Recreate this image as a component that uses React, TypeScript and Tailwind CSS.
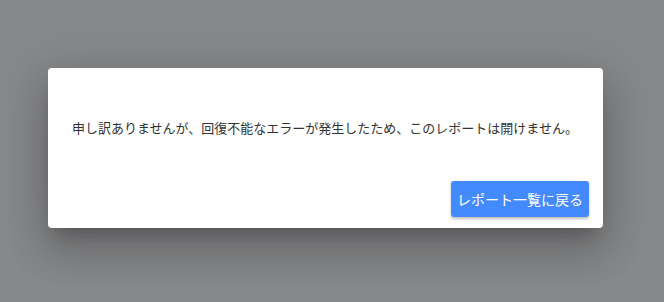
export default function App() {
  return (
    <div
      className="w-[664px] h-[302px] bg-[#87888a] flex items-start justify-start pl-[48px] pt-[68px]"
      style={{ fontFamily: '"Noto Sans CJK JP", "Noto Sans", sans-serif' }}
    >
      <div className="w-[555px] h-[160px] bg-white rounded-[4px] shadow-[0_11px_15px_-7px_rgba(0,0,0,0.2),0_24px_38px_3px_rgba(0,0,0,0.14),0_9px_46px_8px_rgba(0,0,0,0.12)] flex flex-col">
        <div className="pt-[50px] px-6 text-[13px] leading-[20px] text-[#333333]">
          申し訳ありませんが、回復不能なエラーが発生したため、このレポートは開けません。
        </div>
        <div className="flex justify-end mt-[43px] pr-[14px]">
          <button className="h-[36px] px-[6px] bg-[#448aff] text-white text-[14px] rounded-[3px] shadow-[0_2px_3px_rgba(0,0,0,0.25)] whitespace-nowrap">
            レポート一覧に戻る
          </button>
        </div>
      </div>
    </div>
  );
}
